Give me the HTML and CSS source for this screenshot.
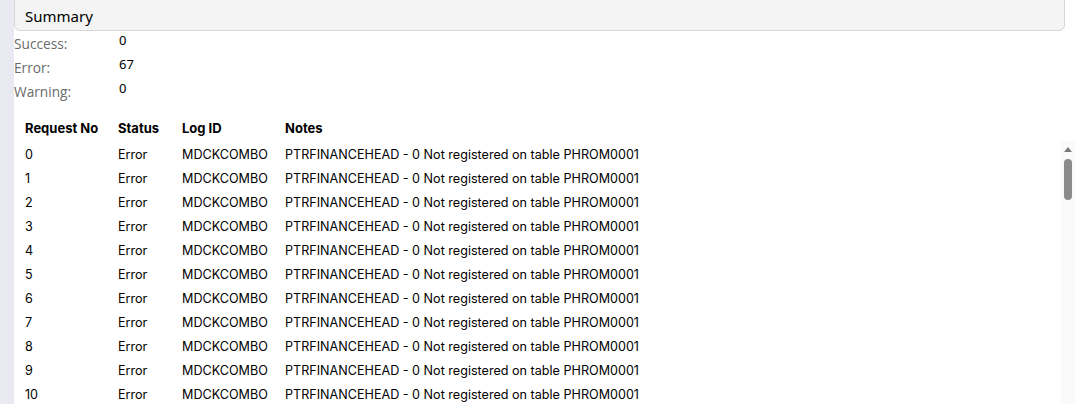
FILE: index.html
```html
<!DOCTYPE html>
<html lang="en">
<head>
    <meta charset="UTF-8">
    <meta name="viewport" content="width=device-width, initial-scale=1.0">
    <title>Summary</title>
    <link rel="stylesheet" href="styles.css">
</head>
<body>

    <div class="main">
        <div class="panel-head">Summary</div>

        <div class="stats">
            <div class="stat-label">Success:</div>
            <div class="stat-value">0</div>
            <div class="stat-label">Error:</div>
            <div class="stat-value">67</div>
            <div class="stat-label">Warning:</div>
            <div class="stat-value">0</div>
        </div>

        <div class="log-head">
            <div>Request No</div>
            <div>Status</div>
            <div>Log ID</div>
            <div>Notes</div>
        </div>
        <div class="log-wrap">
            <div class="log-body" id="logBody"></div>
            <div class="scroll-track">
                <div class="scroll-up"></div>
                <div class="scroll-thumb"></div>
            </div>
        </div>
    </div>

    <script>
        // so as linhas visiveis da lista
        const body = document.getElementById('logBody');
        for (let i = 0; i < 11; i++) {
            const row = document.createElement('div');
            row.className = 'log-row';
            row.innerHTML =
                '<div>' + i + '</div>' +
                '<div>Error</div>' +
                '<div>MDCKCOMBO</div>' +
                '<div>PTRFINANCEHEAD - 0 Not registered on table PHROM0001</div>';
            body.appendChild(row);
        }
    </script>

</body>
</html>
```

FILE: styles.css
```css
html, body {
    margin: 0;
    height: 100%;
    overflow: hidden;
}
body {
    background-color: #e9e9f1;
    font-family: "Open Sans", "Noto Sans", Arial, sans-serif;
    color: #000;
}
.main {
    display: flow-root;
    margin-left: 14px;
    background-color: #fff;
    height: 100%;
}
.panel-head {
    margin-top: -5px;
    margin-right: 10px;
    height: 36px;
    padding-left: 10px;
    box-sizing: border-box;
    background-color: #f4f4f4;
    border: 1px solid #d6d6d6;
    border-radius: 6px;
    font-family: "Noto Sans", Arial, sans-serif;
    font-size: 15px;
    line-height: 40px;
}
.stats {
    display: grid;
    grid-template-columns: 105px 1fr;
    grid-auto-rows: 24px;
    font-size: 13px;
}
.stat-label {
    color: #6b6b6b;
    padding-top: 4px;
    font-size: 13.7px;
    line-height: 18px;
}
.stat-value {
    font-family: "Noto Sans", Arial, sans-serif;
    line-height: 18px;
}
.log-head,
.log-row {
    display: grid;
    grid-template-columns: 93px 64px 103px 1fr;
    padding-left: 11px;
    font-family: Inter, "Noto Sans", sans-serif;
}
.log-head {
    margin-top: 13px;
    height: 24px;
    line-height: 24px;
    font-size: 13px;
    font-weight: 700;
}
.log-row {
    height: 24px;
    line-height: 24px;
    font-size: 12.6px;
}
.log-wrap {
    display: flex;
    margin-top: 1px;
    height: 300px;
}
.log-body {
    flex: 1;
    padding-top: 2px;
    overflow: hidden;
}
.scroll-track {
    width: 14px;
    background-color: #fafafa;
    display: flex;
    flex-direction: column;
    align-items: center;
}
.scroll-up {
    margin-top: 6px;
    width: 0;
    height: 0;
    border-left: 4px solid transparent;
    border-right: 4px solid transparent;
    border-bottom: 5px solid #7a7a7a;
}
.scroll-thumb {
    margin-top: 7px;
    width: 8px;
    height: 41px;
    border-radius: 4px;
    background-color: #8a8a8a;
}
```
